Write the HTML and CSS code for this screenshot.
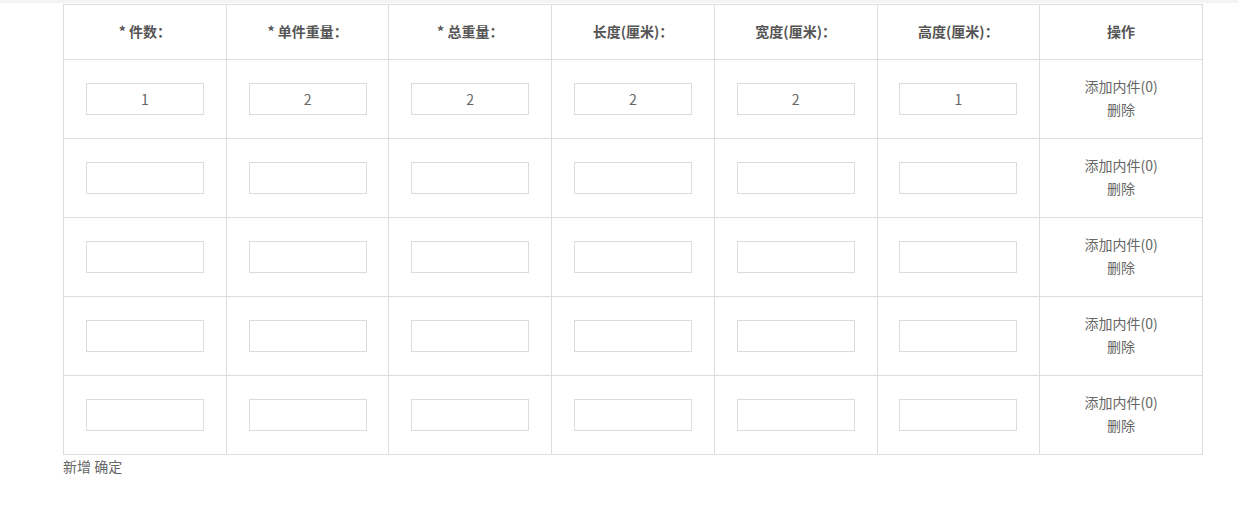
FILE: index.html
```html
<!DOCTYPE html>
<html lang="zh-CN">
<head>
<meta charset="utf-8">
<title>件数</title>
<link rel="stylesheet" href="styles.css">
</head>
<body>
<div class="topbar"></div>
<div class="wrap">
  <table class="grid">
    <thead>
      <tr>
        <th>* 件数：</th>
        <th>* 单件重量：</th>
        <th>* 总重量：</th>
        <th>长度(厘米)：</th>
        <th>宽度(厘米)：</th>
        <th>高度(厘米)：</th>
        <th>操作</th>
      </tr>
    </thead>
    <tbody>
      <tr>
        <td><input class="field" value="1"></td>
        <td><input class="field" value="2"></td>
        <td><input class="field" value="2"></td>
        <td><input class="field" value="2"></td>
        <td><input class="field" value="2"></td>
        <td><input class="field" value="1"></td>
        <td class="ops"><div>添加内件(0)</div><div>删除</div></td>
      </tr>
      <tr>
        <td><input class="field"></td>
        <td><input class="field"></td>
        <td><input class="field"></td>
        <td><input class="field"></td>
        <td><input class="field"></td>
        <td><input class="field"></td>
        <td class="ops"><div>添加内件(0)</div><div>删除</div></td>
      </tr>
      <tr>
        <td><input class="field"></td>
        <td><input class="field"></td>
        <td><input class="field"></td>
        <td><input class="field"></td>
        <td><input class="field"></td>
        <td><input class="field"></td>
        <td class="ops"><div>添加内件(0)</div><div>删除</div></td>
      </tr>
      <tr>
        <td><input class="field"></td>
        <td><input class="field"></td>
        <td><input class="field"></td>
        <td><input class="field"></td>
        <td><input class="field"></td>
        <td><input class="field"></td>
        <td class="ops"><div>添加内件(0)</div><div>删除</div></td>
      </tr>
      <tr>
        <td><input class="field"></td>
        <td><input class="field"></td>
        <td><input class="field"></td>
        <td><input class="field"></td>
        <td><input class="field"></td>
        <td><input class="field"></td>
        <td class="ops"><div>添加内件(0)</div><div>删除</div></td>
      </tr>
    </tbody>
  </table>
  <div class="actions"><span>新增</span> <span>确定</span></div>
</div>
</body>
</html>
```

FILE: styles.css
```css
html, body {
  margin: 0;
  padding: 0;
  background: #fff;
}
body {
  font-family: "Noto Sans CJK SC", "Noto Sans", "Liberation Sans", sans-serif;
  font-size: 14px;
  color: #666;
}
.topbar {
  height: 3px;
  background: #f2f3f5;
}
.wrap {
  padding: 1px 0 0 63px;
}
.grid {
  border-collapse: collapse;
  width: 1140px;
  table-layout: fixed;
}
.grid th,
.grid td {
  border: 1px solid #dddddd;
  text-align: center;
  vertical-align: middle;
  padding: 0;
}
.grid th {
  height: 52px;
  padding-bottom: 2px;
  font-weight: bold;
  color: #555;
  line-height: 20px;
}
.grid td {
  height: 78px;
}
.grid td.ops {
  height: 76px;
  padding-bottom: 2px;
  line-height: 23px;
  color: #666;
}
.field {
  box-sizing: border-box;
  width: 118px;
  height: 32px;
  border: 1px solid #dcdcdc;
  border-radius: 0;
  outline: none;
  padding: 0 4px 1px;
  margin: 0;
  text-align: center;
  font-family: "Noto Sans CJK SC", "Noto Sans", "Liberation Sans", sans-serif;
  font-size: 14px;
  color: #666;
  background: #fff;
  display: inline-block;
  vertical-align: middle;
}
.actions {
  line-height: 23px;
  color: #666;
}
```
